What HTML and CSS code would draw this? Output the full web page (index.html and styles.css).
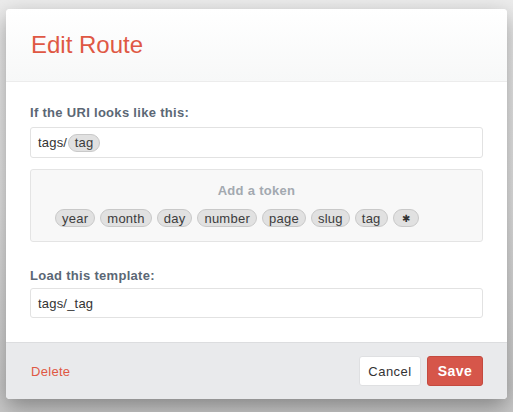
FILE: index.html
```html
<!DOCTYPE html>
<html>
<head>
<meta charset="utf-8">
<link rel="stylesheet" href="styles.css">
</head>
<body>
<div class="backdrop">
  <div class="modal">
    <header class="modal-header">
      <h1 class="title">Edit Route</h1>
    </header>
    <div class="modal-body">
      <label class="field-label">If the URI looks like this:</label>
      <div class="input uri-input"><span>tags/</span><span class="pill">tag</span></div>
      <div class="token-box">
        <div class="token-title">Add a token</div>
        <div class="token-list">
          <span class="pill">year</span>
          <span class="pill">month</span>
          <span class="pill">day</span>
          <span class="pill">number</span>
          <span class="pill">page</span>
          <span class="pill">slug</span>
          <span class="pill">tag</span>
          <span class="pill star">✱</span>
        </div>
      </div>
      <label class="field-label second">Load this template:</label>
      <div class="input">tags/_tag</div>
    </div>
    <footer class="modal-footer">
      <a class="delete">Delete</a>
      <div class="actions">
        <button class="btn btn-cancel">Cancel</button>
        <button class="btn btn-save">Save</button>
      </div>
    </footer>
  </div>
</div>
</body>
</html>
```

FILE: styles.css
```css
html, body {
  margin: 0;
  padding: 0;
}
body {
  width: 513px;
  height: 412px;
  overflow: hidden;
  font-family: "Liberation Sans", Arial, sans-serif;
  background: linear-gradient(to bottom, #ececec 0px, #e4e4e4 200px, #c9c9c9 412px);
}
.backdrop {
  padding: 9px 6px 0 6px;
}
.modal {
  width: 501px;
  background: #fff;
  border-radius: 4px;
  box-shadow: 0 8px 22px rgba(0, 0, 0, 0.35);
  overflow: hidden;
}
.modal-header {
  height: 73px;
  box-sizing: border-box;
  padding: 22px 25px 0 25px;
  background: linear-gradient(to bottom, #ffffff, #f7f8f8);
  border-bottom: 1px solid #ececec;
}
.title {
  margin: 0;
  font-weight: normal;
  font-size: 24px;
  line-height: 28px;
  color: #df5844;
}
.modal-body {
  padding: 23px 24px 24px 24px;
}
.field-label {
  display: block;
  font-size: 13px;
  line-height: 16px;
  font-weight: bold;
  color: #5b6775;
  letter-spacing: 0.3px;
  margin-bottom: 6px;
}
.field-label.second {
  margin-top: 26px;
  margin-bottom: 4px;
}
.input {
  box-sizing: border-box;
  height: 31px;
  border: 1px solid #e2e2e2;
  border-radius: 3px;
  padding: 0 7px;
  display: flex;
  align-items: center;
  font-size: 13px;
  color: #333;
  letter-spacing: 0.2px;
}
.second + .input {
  height: 30px;
}
.pill {
  display: inline-flex;
  align-items: center;
  box-sizing: border-box;
  height: 18px;
  padding: 0 6px;
  border-radius: 9px;
  background: #e1e1e1;
  border: 1px solid #c9c9c9;
  font-size: 13px;
  color: #3c3c3c;
  letter-spacing: 0.25px;
}
.uri-input .pill {
  margin-left: 1px;
  padding: 0 5.5px;
}
.token-box {
  margin-top: 11px;
  height: 73px;
  box-sizing: border-box;
  background: #f8f8f8;
  border: 1px solid #e4e4e4;
  border-radius: 3px;
  padding: 13px 0 0 24px;
}
.token-title {
  text-align: center;
  padding-right: 24px;
  font-size: 13px;
  line-height: 16px;
  font-weight: bold;
  color: #a3a9b0;
  letter-spacing: 0.3px;
}
.token-list {
  margin-top: 10px;
  display: flex;
  gap: 5px;
}
.pill.star {
  font-size: 10px;
  padding: 0 8px;
  color: #333;
}
.modal-footer {
  height: 57px;
  box-sizing: border-box;
  background: #e9eaec;
  border-top: 1px solid #dcdddf;
  display: flex;
  align-items: center;
  justify-content: space-between;
  padding: 0 24px 0 25px;
}
.delete {
  color: #df5844;
  font-size: 13px;
  letter-spacing: 0.3px;
}
.actions {
  display: flex;
  gap: 6px;
}
.btn {
  font-family: "Liberation Sans", Arial, sans-serif;
  height: 30px;
  border-radius: 3px;
  cursor: pointer;
}
.btn-cancel {
  width: 62px;
  background: #fff;
  border: 1px solid #dfe0e2;
  color: #333;
  font-size: 13px;
  letter-spacing: 0.5px;
}
.btn-save {
  width: 56px;
  background: #d6564a;
  border: 1px solid #c44a3f;
  color: #fff;
  font-size: 14px;
  font-weight: bold;
  letter-spacing: 0.4px;
}
```
